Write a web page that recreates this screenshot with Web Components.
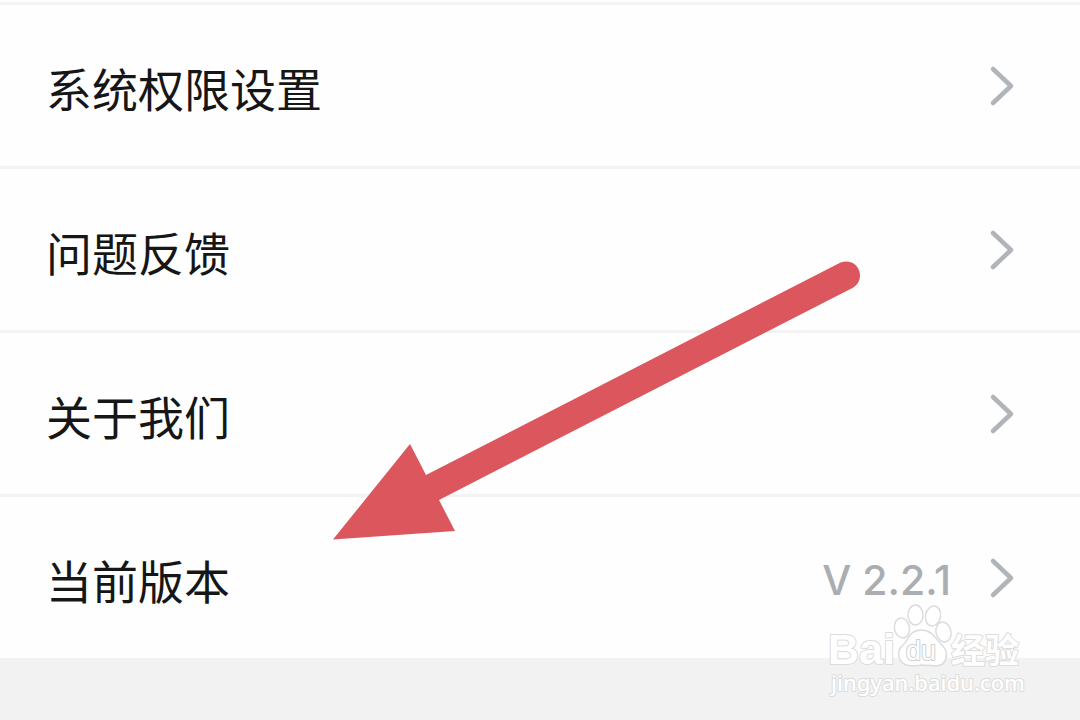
<!DOCTYPE html>
<html lang="zh-CN">
<head>
<meta charset="utf-8">
<meta name="viewport" content="width=device-width, initial-scale=1">
<title>设置</title>
<style>
body { margin: 0; background: #f2f2f2; font-family: "Noto Sans CJK SC", sans-serif; color: #161616; }
</style>
</head>
<body>
<settings-page>
  <settings-row>系统权限设置</settings-row>
  <settings-row>问题反馈</settings-row>
  <settings-row>关于我们</settings-row>
  <settings-row>当前版本<span slot="value">V 2.2.1</span></settings-row>
  <pointer-arrow slot="overlay"></pointer-arrow>
  <site-watermark slot="overlay"></site-watermark>
</settings-page>

<template id="page-template">
  <style>
    :host { display: block; position: relative; min-height: 100vh; }
    main { display: flex; flex-direction: column; padding-top: 2px; background: #fefefe; }
  </style>
  <main><slot></slot></main>
  <slot name="overlay"></slot>
</template>

<template id="row-template">
  <style>
    :host { display: block; border-top: 3px solid #f3f3f3; }
    a { display: flex; align-items: center; box-sizing: border-box; min-height: 161px; padding: 0 64px 0 46px; color: inherit; text-decoration: none; }
    .label { flex: 1; font-size: 46px; line-height: 60px; padding-top: 2px; }
    .value { font: 500 41px/48px Inter, sans-serif; color: #aaaeb3; padding-top: 4px; margin-right: 37px; }
    svg { display: block; flex: none; }
  </style>
  <a href="#">
    <span class="label"><slot></slot></span>
    <span class="value"><slot name="value"></slot></span>
    <svg width="28" height="42" viewBox="0 0 28 42" aria-hidden="true">
      <path d="M5 4 23 21 5 38" fill="none" stroke="#b1b4b8" stroke-width="4.500" stroke-linecap="round" stroke-linejoin="round"/>
    </svg>
  </a>
</template>

<template id="arrow-template">
  <style>
    :host { display: block; position: absolute; top: 260px; left: 332px; pointer-events: none; }
    svg { display: block; }
  </style>
  <svg width="530" height="282" viewBox="332 260 530 282" aria-hidden="true">
    <path d="M333 539.500 410 444 426 475 840.600 262.600A14 14 0 0 1 853.400 287.400L439 500 455 531Z" fill="#db565d"/>
  </svg>
</template>

<template id="watermark-template">
  <style>
    :host { display: block; position: absolute; top: 600px; right: 52px; pointer-events: none; }
    svg { display: block; }
    text { paint-order: stroke; stroke: #dcdcdc; stroke-width: 2px; stroke-linejoin: round; fill: #fff; }
    .brand { font: 700 43px "Liberation Sans", sans-serif; }
    .mark { font: 400 27px "Liberation Sans", sans-serif; stroke: #d0d0d0; }
    .name { font: 700 34px "Noto Sans CJK SC", sans-serif; }
    .site { font: 500 22px "Noto Sans", sans-serif; }
  </style>
  <svg width="200" height="100" viewBox="828 600 200 100" role="img" aria-label="Baidu 经验">
    <text class="brand" x="828" y="664">Bai</text>
    <g fill="#fff" stroke="#dcdcdc" stroke-width="1.500">
      <ellipse cx="902" cy="628" rx="7.500" ry="10" transform="rotate(-12 902 628)"/>
      <ellipse cx="915.500" cy="615" rx="7.500" ry="10"/>
      <ellipse cx="933" cy="616" rx="7.500" ry="10" transform="rotate(12 933 616)"/>
      <ellipse cx="943.500" cy="632" rx="7.500" ry="10" transform="rotate(-14 943.500 632)"/>
      <path d="M921 630C910 630 909 639 904 644C899 648 898 653 899 657C902 668 913 666 922 665C934 666 944 668 946 658C948 651 944 647 939 642C934 636 931 630 921 630Z"/>
    </g>
    <text class="mark" x="906" y="660">du</text>
    <text class="name" x="951" y="663">经验</text>
    <text class="site" x="831" y="691">jingyan.baidu.com</text>
  </svg>
</template>

<script>
function define(name, templateId) {
  customElements.define(name, class extends HTMLElement {
    constructor() {
      super();
      this.attachShadow({ mode: "open" })
        .append(document.getElementById(templateId).content.cloneNode(true));
    }
  });
}
define("settings-page", "page-template");
define("settings-row", "row-template");
define("pointer-arrow", "arrow-template");
define("site-watermark", "watermark-template");
</script>
</body>
</html>
